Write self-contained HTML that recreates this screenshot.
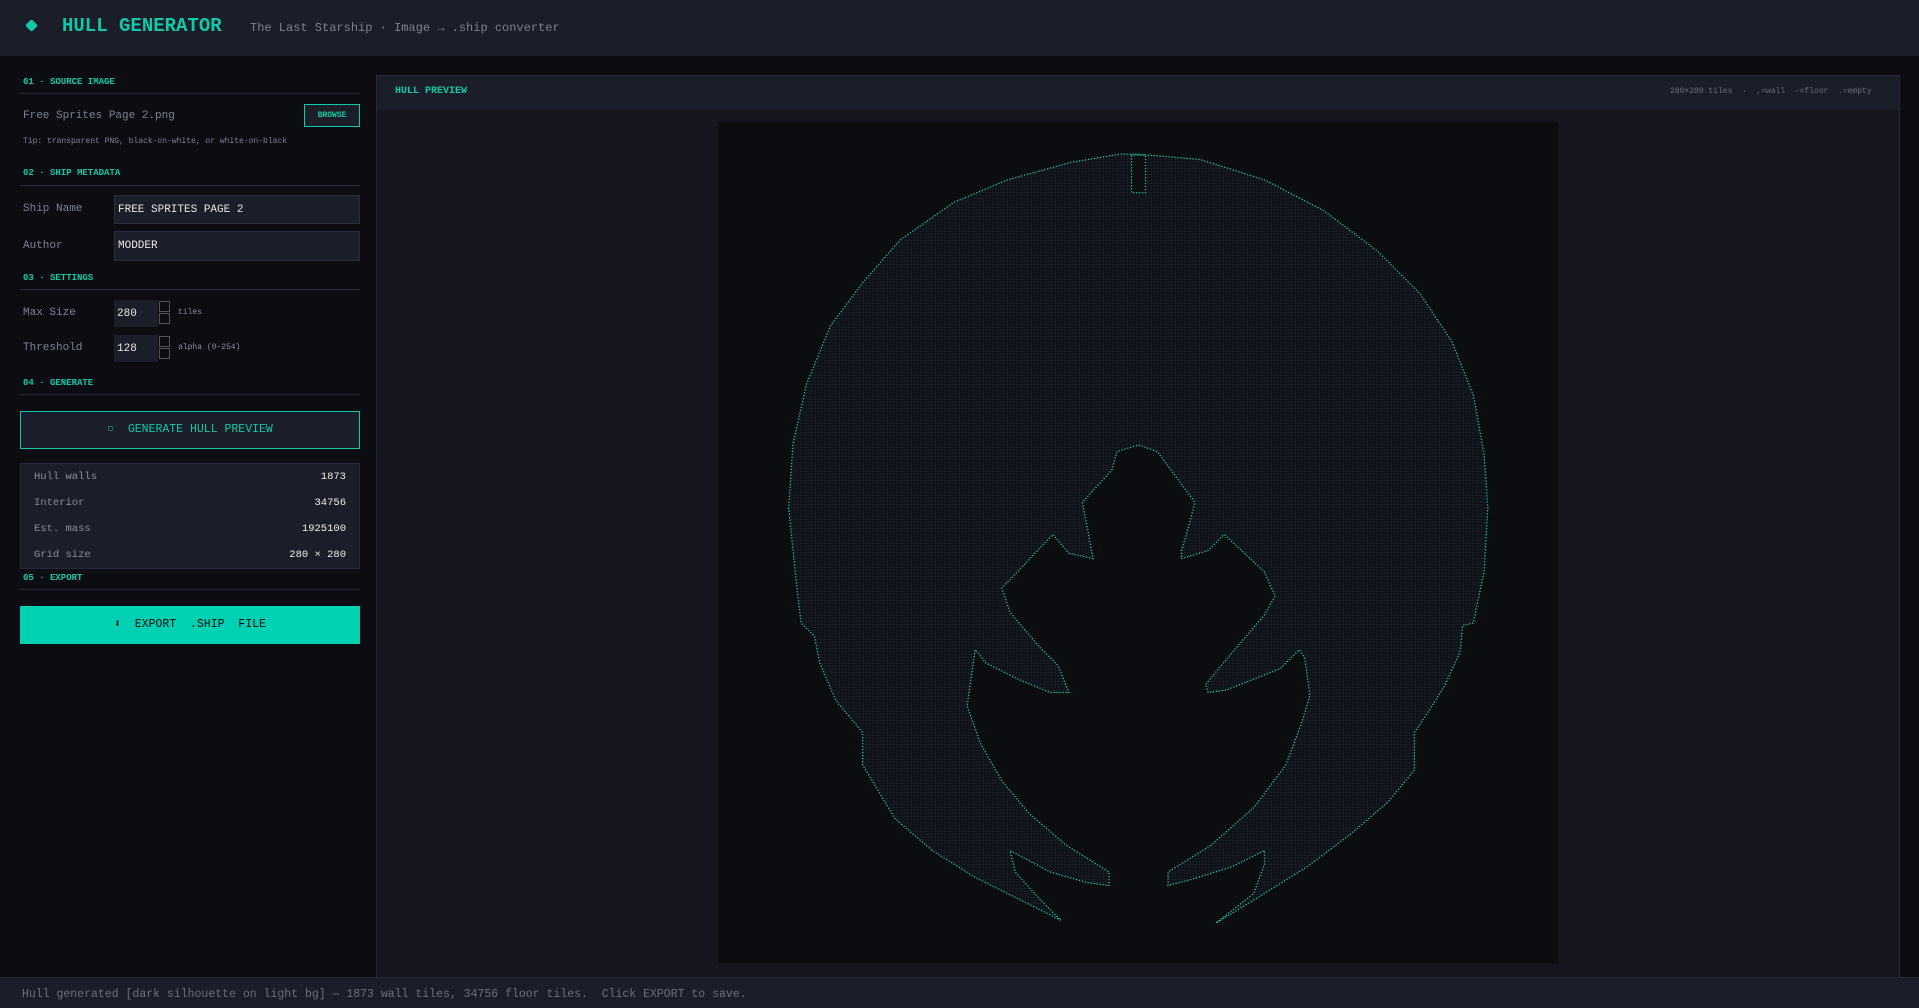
<!DOCTYPE html>
<html><head><meta charset="utf-8"><style>
*{margin:0;padding:0;box-sizing:border-box}
body{width:1919px;height:1008px;background:#0c0d12;font-family:"Liberation Mono",monospace;color:#8a8f9c;position:relative;overflow:hidden}
.a{position:absolute}
.hdr{left:0;top:0;width:1919px;height:56px;background:#1b1d28}
.sh{font-size:9px;font-weight:bold;color:#10c9a8;left:23px;letter-spacing:0}
.ln{left:20px;width:340px;height:1px;background:#262935}
.lbl{font-size:11px;color:#7d8290;left:23px}
.inp{background:#1b1d28;border:1px solid #2a2d3a;color:#e8e8e8;font-size:11px;padding-left:3px;display:flex;align-items:center}
.spin{width:11px;border:1px solid #555;background:#0c0d12}
.row{left:34px;width:312px;font-size:10.5px;display:flex;justify-content:space-between}
.row b{color:#eee;font-weight:normal}
</style></head><body>
<div class="a hdr"></div>
<div class="a" style="left:27px;top:21px;width:9px;height:9px;background:#10c9a8;transform:rotate(45deg);border-radius:2px"></div>
<div class="a" style="left:62px;top:15px;font-size:19px;font-weight:bold;color:#10c9a8">HULL GENERATOR</div>
<div class="a" style="left:250px;top:21px;font-size:12px;color:#7d8290">The Last Starship · Image → .ship converter</div>

<div class="a sh" style="top:77px">01 · SOURCE IMAGE</div>
<div class="a ln" style="top:93px"></div>
<div class="a lbl" style="top:110px">Free Sprites Page 2.png</div>
<div class="a" style="left:304px;top:104px;width:56px;height:23px;border:1px solid #10c9a8;background:#1b1d28;color:#10c9a8;font-size:8px;font-weight:bold;text-align:center;line-height:21px">BROWSE</div>
<div class="a" style="left:23px;top:137px;font-size:8px;color:#7d8290">Tip: transparent PNG, black-on-white, or white-on-black</div>

<div class="a sh" style="top:168px">02 · SHIP METADATA</div>
<div class="a ln" style="top:185px"></div>
<div class="a lbl" style="top:203px">Ship Name</div>
<div class="a inp" style="left:114px;top:195px;width:246px;height:29px">FREE SPRITES PAGE 2</div>
<div class="a lbl" style="top:240px">Author</div>
<div class="a inp" style="left:114px;top:231px;width:246px;height:30px">MODDER</div>

<div class="a sh" style="top:273px">03 · SETTINGS</div>
<div class="a ln" style="top:289px"></div>
<div class="a lbl" style="top:307px">Max Size</div>
<div class="a inp" style="left:114px;top:300px;width:44px;height:27px;border:none">280</div>
<div class="a spin" style="left:159px;top:301px;height:11px"></div><div class="a spin" style="left:159px;top:313px;height:11px"></div>
<div class="a" style="left:178px;top:308px;font-size:8px">tiles</div>
<div class="a lbl" style="top:342px">Threshold</div>
<div class="a inp" style="left:114px;top:335px;width:44px;height:27px;border:none">128</div>
<div class="a spin" style="left:159px;top:336px;height:11px"></div><div class="a spin" style="left:159px;top:348px;height:11px"></div>
<div class="a" style="left:178px;top:343px;font-size:8px">alpha (0–254)</div>

<div class="a sh" style="top:378px">04 · GENERATE</div>
<div class="a ln" style="top:394px"></div>
<div class="a" style="left:20px;top:411px;width:340px;height:38px;border:1px solid #10c9a8;background:#1b1d28;color:#10c9a8;font-size:11.5px;text-align:center;line-height:36px">○&nbsp; GENERATE HULL PREVIEW</div>
<div class="a" style="left:20px;top:463px;width:340px;height:106px;border:1px solid #262935;background:#1b1d28"></div>
<div class="a row" style="top:471px"><span>Hull walls</span><b>1873</b></div>
<div class="a row" style="top:497px"><span>Interior</span><b>34756</b></div>
<div class="a row" style="top:523px"><span>Est. mass</span><b>1925100</b></div>
<div class="a row" style="top:549px"><span>Grid size</span><b>280 × 280</b></div>
<div class="a sh" style="top:573px">05 · EXPORT</div>
<div class="a ln" style="top:589px"></div>
<div class="a" style="left:20px;top:606px;width:340px;height:38px;background:#00d1b2;color:#0c0d12;font-size:11.5px;text-align:center;line-height:38px">⬇&nbsp; EXPORT &nbsp;.SHIP &nbsp;FILE</div>

<div class="a" style="left:376px;top:75px;width:1524px;height:902px;background:#14151d;border-left:1px solid #262935;border-right:1px solid #262935"></div>
<div class="a" style="left:377px;top:75px;width:1522px;height:35px;background:#1b1d28;border-top:1px solid #262935"></div>
<div class="a" style="left:395px;top:86px;font-size:10px;font-weight:bold;color:#10c9a8">HULL PREVIEW</div>
<div class="a" style="left:1670px;top:87px;font-size:8px;color:#6b707d;white-space:pre">280×280 tiles  ·  ,=wall  -=floor  .=empty</div>
<div class="a" style="left:718px;top:122px;width:840px;height:841px;background:#0c0d11">
<svg width="840" height="840" viewBox="0 0 1568 1568">
<defs><pattern id="p" width="5.6" height="5.6" patternUnits="userSpaceOnUse"><rect width="5.6" height="5.6" fill="#101218"/><rect x="1.5" y="1.5" width="2" height="2" fill="#1d2d34"/></pattern></defs>
<path fill="url(#p)" fill-rule="evenodd" stroke="#18c7a3" stroke-width="2.4" stroke-dasharray="2.4 3.2" d="M785,60 L900,70 1020,108 1130,165 1230,240 1310,320 1370,410 1410,510 1430,620 1437,720 1430,840 1415,910 1410,935 1390,940 1385,990 1355,1055 1320,1110 1300,1140 1300,1210 1250,1270 1180,1330 1100,1390 1020,1440 930,1495 1000,1440 1020,1385 1020,1360 960,1390 880,1415 840,1425 840,1400 920,1350 1000,1280 1060,1200 1090,1120 1105,1070 1095,1000 1085,985 1050,1020 950,1060 915,1065 910,1050 960,990 1020,920 1040,885 1020,840 945,770 915,800 865,815 865,800 880,750 890,710 820,615 785,603 745,615 735,650 680,710 690,760 700,815 655,805 625,770 530,870 545,915 600,980 635,1015 655,1065 620,1065 560,1040 500,1010 480,985 465,1090 490,1160 530,1230 580,1290 650,1350 730,1400 730,1425 690,1420 620,1400 545,1360 555,1400 600,1450 640,1490 560,1450 480,1410 400,1360 330,1300 270,1200 270,1140 220,1080 190,1010 180,960 155,935 145,850 132,720 140,600 165,490 210,380 270,300 340,220 440,150 540,108 660,75 750,60 Z M772,62 L772,132 798,132 798,62 Z"/>
</svg></div>

<div class="a" style="left:0;top:977px;width:1919px;height:31px;background:#1b1d28;border-top:1px solid #262935"></div>
<div class="a" style="left:22px;top:988px;font-size:11.5px;color:#6b707d;white-space:pre">Hull generated [dark silhouette on light bg] — 1873 wall tiles, 34756 floor tiles.  Click EXPORT to save.</div>
</body></html>
